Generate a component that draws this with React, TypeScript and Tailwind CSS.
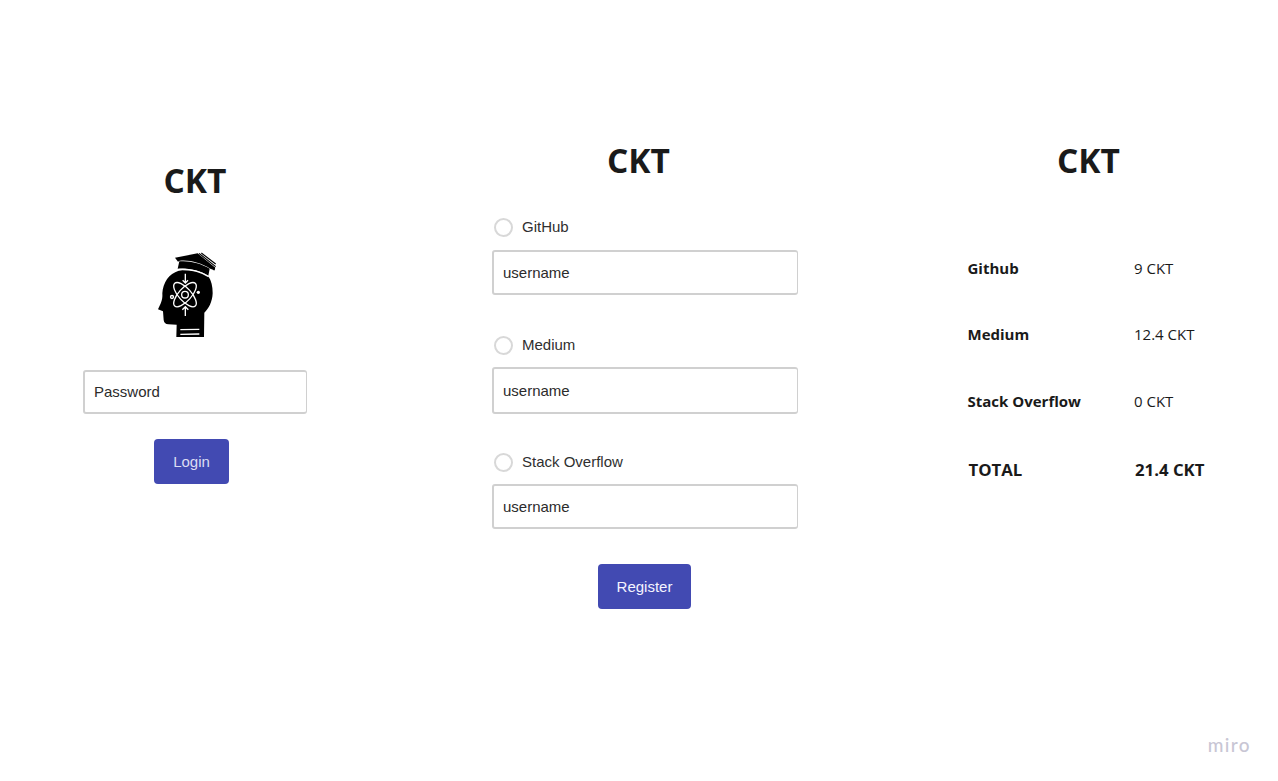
import React from 'react';

function Title({ className }: { className: string }) {
  return (
    <h1 className={`h-12 text-[33.5px] leading-[48px] font-bold text-[#1a1a1a] ${className}`}>CKT</h1>
  );
}

function BrainIcon() {
  return (
    <svg className="h-[105px] w-[85px]" viewBox="0 0 255 315" fill="none" aria-hidden="true">
      <path
        fill="#000"
        d="M101 92 C72 101 54 127 52 160 C53 176 50 184 46 193 L39 208 L54 214 L56 240 Q57 252 70 253 L95 254 L94 291 L177 291 L178 218 C191 206 202 186 203 160 C203 139 199 122 190 109 C168 95 139 88 101 92 Z"
      />
      <path fill="#000" d="M103 64 C133 61 168 70 194 86 L190 107 C164 91 132 84 98 86 Z" />
      <path fill="#000" d="M90 53 L158 40 L211 83 L208 91 L196 86 C167 68 135 59 104 62 L99 65 Z" />
      <path stroke="#000" strokeWidth="3.5" d="M162 40 L212 80 M169 39 L212 72" />
      <path stroke="#000" strokeWidth="4" d="M207 82 L207 91" />
      <g stroke="#fff" strokeWidth="4">
        <path d="M98 89 C132 86 164 94 191 110" />
        <ellipse cx="120" cy="164" rx="46" ry="19" transform="rotate(48 120 164)" />
        <ellipse cx="120" cy="164" rx="46" ry="19" transform="rotate(-48 120 164)" />
        <circle cx="120" cy="164" r="10" fill="#000" />
        <circle cx="81" cy="171" r="4.5" />
        <path d="M121 101 V128 M113 121 L121 129 L129 121 M121 228 V201 M112 209 L121 200 L130 209" />
        <path d="M106 269 L163 268 M106 283 L163 282" />
      </g>
      <circle cx="160" cy="157" r="5" fill="#fff" />
    </svg>
  );
}

function Field({ text, className }: { text: string; className: string }) {
  return (
    <div
      className={`flex items-center rounded-[3px] border-2 border-r-[1.5px] border-[#d0d0d0] bg-white pt-[2px] pl-[9px] font-['Liberation_Sans',sans-serif] text-[15px] text-[#2b2b2b] ${className}`}
    >
      {text}
    </div>
  );
}

function Choice({ label, className }: { label: string; className: string }) {
  return (
    <div
      className={`flex h-5 items-center gap-[9.5px] pl-[1.5px] font-['Liberation_Sans',sans-serif] text-[15px] text-[#2f2f2f] ${className}`}
    >
      <span className="size-[19px] rounded-full border-2 border-[#d8d8d8]" />
      <span>{label}</span>
    </div>
  );
}

function Action({ text, className }: { text: string; className: string }) {
  return (
    <button
      className={`flex items-center justify-center rounded-[4px] bg-[#424ab2] pt-[2px] font-['Liberation_Sans',sans-serif] text-[15px] ${className}`}
    >
      {text}
    </button>
  );
}

function Score({ name, value, className }: { name: string; value: string; className: string }) {
  return (
    <div className={`flex h-6 text-[15px] leading-6 text-[#1a1a1a] ${className}`}>
      <span className="w-[166.5px] font-bold">{name}</span>
      <span>{value}</span>
    </div>
  );
}

export default function App() {
  return (
    <main className="flex h-[781px] w-[1278px] flex-col overflow-hidden bg-white font-['Open_Sans',sans-serif]">
      <div className="flex h-[730px] pl-[83px]">
        <section className="flex w-[224px] flex-col items-center pt-[156px]">
          <Title className="" />
          <div className="mt-9 mr-[15px]">
            <BrainIcon />
          </div>
          <Field text="Password" className="mt-[24.5px] h-[44px] w-[224px]" />
          <Action text="Login" className="mt-[25.5px] mr-[7px] h-[45px] w-[75px] text-[#dcddf2]" />
        </section>

        <section className="ml-[185px] flex w-[306px] flex-col pt-[136px]">
          <Title className="mr-[13px] text-center" />
          <Choice label="GitHub" className="mt-[33px]" />
          <Field text="username" className="mt-[13px] h-[45px]" />
          <Choice label="Medium" className="mt-[40px]" />
          <Field text="username" className="mt-[12px] h-[47px]" />
          <Choice label="Stack Overflow" className="mt-[38px]" />
          <Field text="username" className="mt-[12px] h-[45px]" />
          <Action text="Register" className="mt-[35px] ml-[106px] h-[45px] w-[93px] text-[#f4f4ff]" />
        </section>

        <section className="ml-[169.5px] flex w-[242px] flex-col pt-[136px]">
          <Title className="text-center" />
          <Score name="Github" value="9 CKT" className="mt-[72px]" />
          <Score name="Medium" value="12.4 CKT" className="mt-[42px]" />
          <Score name="Stack Overflow" value="0 CKT" className="mt-[43px]" />
          <div className="mt-[45px] flex h-6 pl-[1px] text-[16.8px] leading-6 font-bold text-[#1a1a1a]">
            <span className="w-[166.5px]">TOTAL</span>
            <span>21.4 CKT</span>
          </div>
        </section>
      </div>
      <footer className="flex justify-end pt-[3px] pr-[27px] font-['Lato',sans-serif] text-[19px] leading-6 font-medium tracking-[1.4px] text-[#c8c6d4]">
        miro
      </footer>
    </main>
  );
}
